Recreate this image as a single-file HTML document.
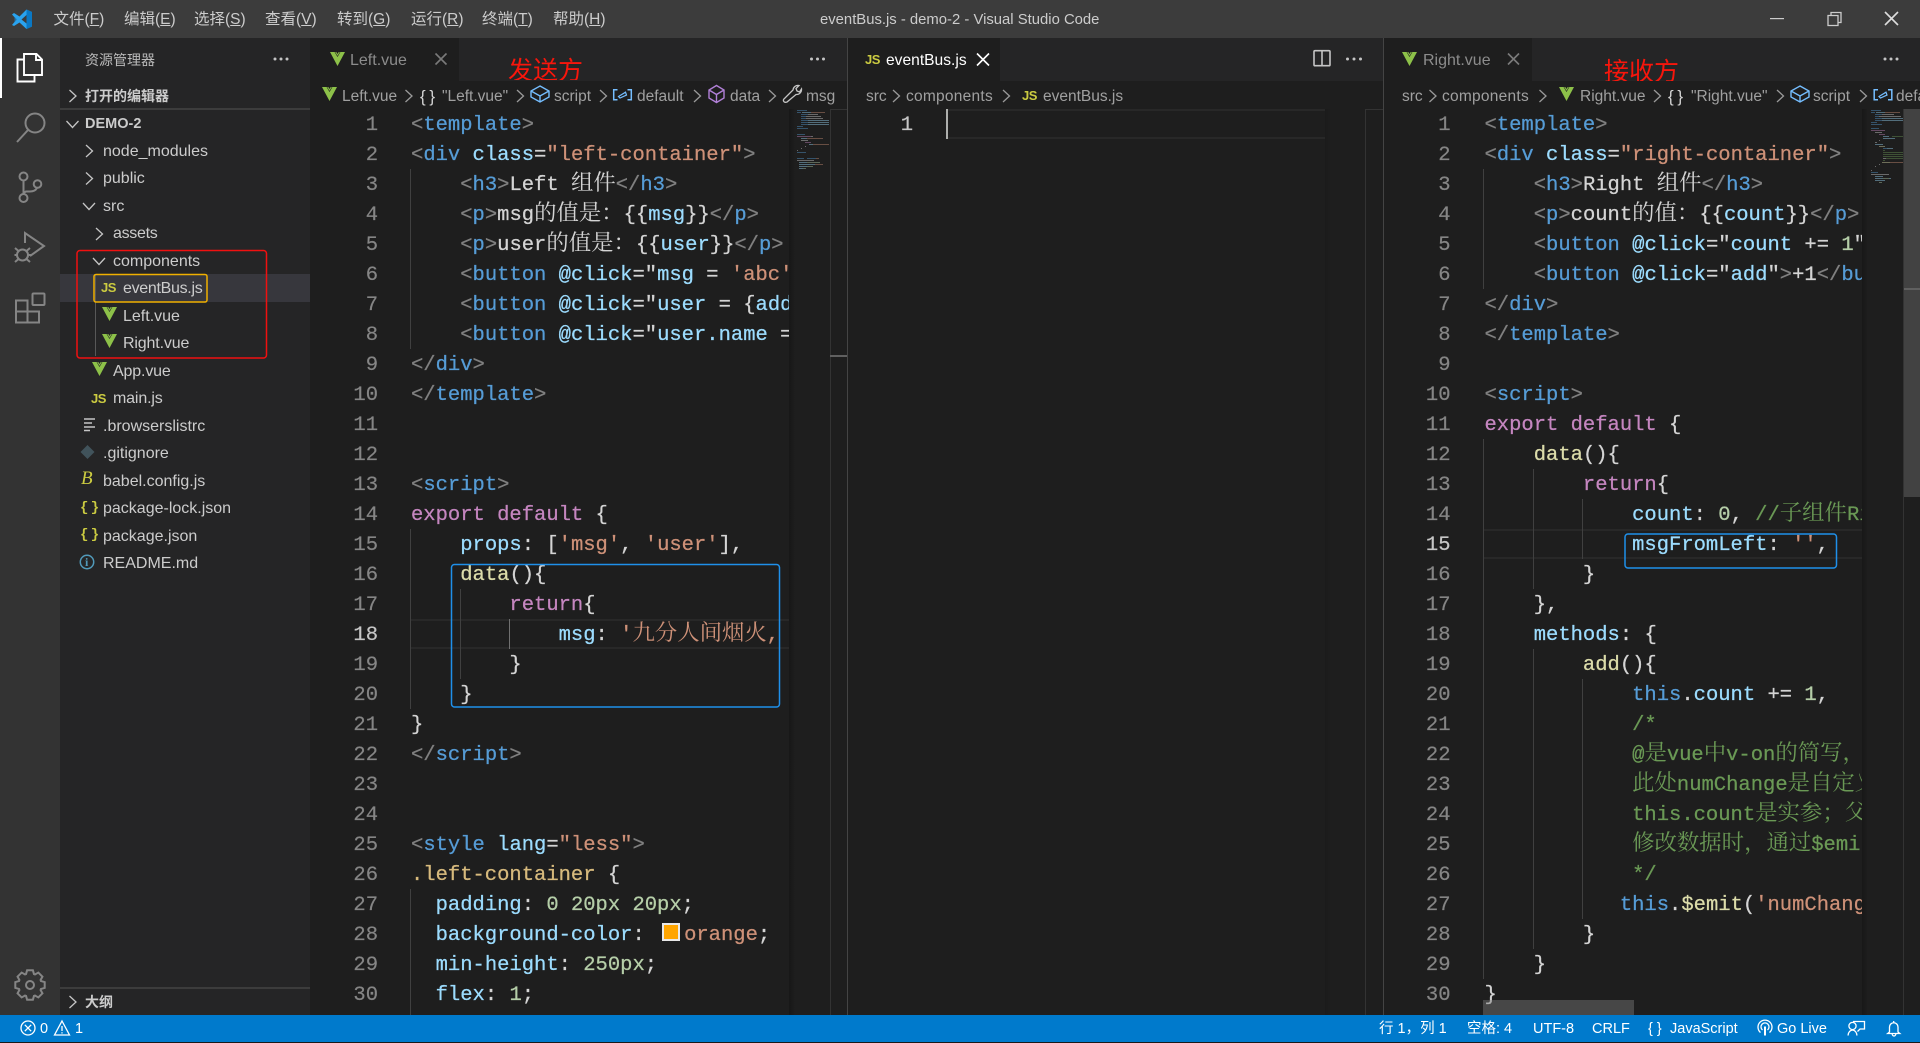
<!DOCTYPE html>
<html lang="zh"><head><meta charset="utf-8"><title>eventBus.js - demo-2 - Visual Studio Code</title>
<style>
html,body{margin:0;padding:0;width:1920px;height:1043px;overflow:hidden;background:#1a1a1a}
body{position:relative;font-family:"Liberation Sans","Noto Sans CJK SC",sans-serif;color:#ccc}
.r{position:absolute}
.t{position:absolute;white-space:pre}
.m{top:1px;height:38px;line-height:38px;font-size:15.5px;color:#ccc}
.f{font-size:16px;color:#ccc;height:28px;line-height:30px}
.h{font-size:14px;font-weight:bold;color:#ccc;height:28px;line-height:28px}
.c{top:82px;height:29px;line-height:29px;font-size:15.5px;color:#a0a0a0}
.tb{top:47px;height:28px;line-height:28px;font-size:16px;color:#8c8c8c}
.sb{top:1016px;height:27px;line-height:27px;font-size:14.5px;color:#fff}
.js{font-weight:bold;font-size:13px;color:#cbcb41;height:14px;line-height:14px;letter-spacing:-.5px}
.red{font-family:"Noto Sans CJK SC",sans-serif;font-size:25px;color:#f8160c;line-height:30px;height:26px;overflow:hidden}
.gd{position:absolute;width:1px;background:#404040}
.hl{position:absolute;height:26px;border-top:2px solid #282828;border-bottom:2px solid #282828}
.ln{position:absolute;top:111px;margin:0;font:20.5px/30px "Liberation Mono",monospace;color:#858585;text-align:right;-webkit-text-stroke:.2px}
.ln b{font-weight:normal;color:#c6c6c6}
.code{position:absolute;top:111px;height:904px;overflow:hidden;font:20.5px/30px "Liberation Mono",monospace;color:#d4d4d4;-webkit-text-stroke:.25px}
.code div{height:30px;white-space:pre;line-height:30px}
.code i{font-style:normal}
.code em{font-style:normal;font-size:22.4px;line-height:0;font-family:"Noto Serif CJK SC","Noto Sans CJK SC",serif;-webkit-text-stroke:0}
.g{color:#808080}.b{color:#569cd6}.a{color:#9cdcfe}.s{color:#ce9178}.k{color:#c586c0}.f2{color:#dcdcaa}.cm{color:#6a9955}.n{color:#b5cea8}.y{color:#d7ba7d}
</style></head><body>

<div class="r" style="left:0;top:0;width:1920px;height:38px;background:#3c3c3c"></div>
<div class="r" style="left:0;top:38px;width:60px;height:977px;background:#333"></div>
<div class="r" style="left:0;top:38px;width:2px;height:60px;background:#fff"></div>
<div class="r" style="left:60px;top:38px;width:250px;height:977px;background:#252526"></div>
<div class="r" style="left:310px;top:38px;width:1610px;height:977px;background:#1e1e1e"></div>
<div class="r" style="left:310px;top:38px;width:537px;height:43px;background:#252526"></div>
<div class="r" style="left:848px;top:38px;width:535px;height:43px;background:#252526"></div>
<div class="r" style="left:1384px;top:38px;width:536px;height:43px;background:#252526"></div>
<div class="r" style="left:310px;top:38px;width:149px;height:43px;background:#1e1e1e"></div>
<div class="r" style="left:848px;top:38px;width:152px;height:43px;background:#1e1e1e"></div>
<div class="r" style="left:1384px;top:38px;width:148px;height:43px;background:#1e1e1e"></div>
<div class="r" style="left:847px;top:38px;width:1px;height:977px;background:#444"></div>
<div class="r" style="left:1383px;top:38px;width:1px;height:977px;background:#444"></div>
<div class="r" style="left:60px;top:108px;width:250px;height:2px;background:#3c3c3c"></div>
<div class="r" style="left:60px;top:987px;width:250px;height:2px;background:#3c3c3c"></div>
<div class="r" style="left:60px;top:274px;width:250px;height:28px;background:#37373d"></div>
<div class="r" style="left:95px;top:274px;width:1px;height:82px;background:#585858"></div>

<!-- minimap shadows and scrollbar columns -->
<div class="r" style="left:789px;top:109px;width:6px;height:906px;background:linear-gradient(90deg,#171717,#1e1e1e)"></div>
<div class="r" style="left:1325px;top:109px;width:6px;height:906px;background:linear-gradient(90deg,#1b1b1b,#1e1e1e)"></div>
<div class="r" style="left:1862px;top:109px;width:6px;height:906px;background:linear-gradient(90deg,#171717,#1e1e1e)"></div>
<div class="r" style="left:830px;top:109px;width:1px;height:906px;background:#333"></div>
<div class="r" style="left:830px;top:109px;width:17px;height:1px;background:#333"></div>
<div class="r" style="left:830px;top:355px;width:17px;height:2px;background:#606060"></div>
<div class="r" style="left:1365px;top:109px;width:1px;height:906px;background:#333"></div>
<div class="r" style="left:1365px;top:109px;width:18px;height:1px;background:#333"></div>
<div class="r" style="left:1903px;top:109px;width:1px;height:906px;background:#333"></div>
<div class="r" style="left:1904px;top:109px;width:16px;height:388px;background:#424242"></div>
<div class="r" style="left:1904px;top:288px;width:16px;height:2px;background:#606060"></div>

<!-- current line highlight -->
<div class="hl" style="left:410px;top:619px;width:379px"></div>
<div class="hl" style="left:946px;top:109px;width:379px"></div>
<div class="hl" style="left:1484px;top:529px;width:378px"></div>

<!-- indent guides -->
<div class="gd" style="left:410px;top:169px;height:180px"></div>
<div class="gd" style="left:410px;top:529px;height:180px"></div>
<div class="gd" style="left:410px;top:889px;height:126px"></div>
<div class="gd" style="left:460px;top:589px;height:90px"></div>
<div class="gd" style="left:509px;top:619px;height:30px;background:#707070"></div>
<div class="gd" style="left:1483px;top:169px;height:120px"></div>
<div class="gd" style="left:1483px;top:439px;height:540px"></div>
<div class="gd" style="left:1533px;top:469px;height:120px"></div>
<div class="gd" style="left:1533px;top:649px;height:300px"></div>
<div class="gd" style="left:1582px;top:499px;height:60px"></div>
<div class="gd" style="left:1582px;top:679px;height:240px"></div>

<!-- title bar -->
<span class="t m" style="left:53.5px">文件(<u>F</u>)</span>
<span class="t m" style="left:124px">编辑(<u>E</u>)</span>
<span class="t m" style="left:194px">选择(<u>S</u>)</span>
<span class="t m" style="left:265px">查看(<u>V</u>)</span>
<span class="t m" style="left:337px">转到(<u>G</u>)</span>
<span class="t m" style="left:411px">运行(<u>R</u>)</span>
<span class="t m" style="left:482px">终端(<u>T</u>)</span>
<span class="t m" style="left:553px">帮助(<u>H</u>)</span>
<span class="t m" style="left:820px;font-size:14.85px">eventBus.js - demo-2 - Visual Studio Code</span>

<!-- sidebar text -->
<span class="t" style="left:85px;top:46px;height:28px;line-height:28px;font-size:14px;color:#bbb">资源管理器</span>
<span class="t h" style="left:85px;top:82px">打开的编辑器</span>
<span class="t h" style="left:85px;top:110px;font-size:14.5px">DEMO-2</span>
<span class="t f" style="left:103px;top:137px">node_modules</span>
<span class="t f" style="left:103px;top:164px">public</span>
<span class="t f" style="left:103px;top:192px">src</span>
<span class="t f" style="left:113px;top:219px;letter-spacing:-.3px">assets</span>
<span class="t f" style="left:113px;top:247px">components</span>
<span class="t f" style="left:123px;top:274px;letter-spacing:-.3px">eventBus.js</span>
<span class="t f" style="left:123px;top:302px">Left.vue</span>
<span class="t f" style="left:123px;top:329px;letter-spacing:-.15px">Right.vue</span>
<span class="t f" style="left:113px;top:357px;letter-spacing:-.15px">App.vue</span>
<span class="t f" style="left:113px;top:384px;letter-spacing:-.15px">main.js</span>
<span class="t f" style="left:103px;top:412px">.browserslistrc</span>
<span class="t f" style="left:103px;top:439px">.gitignore</span>
<span class="t f" style="left:103px;top:467px">babel.config.js</span>
<span class="t f" style="left:103px;top:494px">package-lock.json</span>
<span class="t f" style="left:103px;top:522px">package.json</span>
<span class="t f" style="left:103px;top:549px">README.md</span>
<span class="t h" style="left:85px;top:988px">大纲</span>
<span class="t js" style="left:101px;top:281px">JS</span>
<span class="t js" style="left:91px;top:392px">JS</span>
<span class="t" style="left:81px;top:470px;font:italic 19px/18px 'Liberation Serif',serif;color:#cbcb41">B</span>
<span class="t" style="left:80px;top:498px;font:bold 14px/20px 'Liberation Mono',monospace;color:#cbcb41;letter-spacing:-3px">{ }</span>
<span class="t" style="left:80px;top:525px;font:bold 14px/20px 'Liberation Mono',monospace;color:#cbcb41;letter-spacing:-3px">{ }</span>
<span class="t" style="left:85px;top:554px;font:bold 12px/16px 'Liberation Serif',serif;color:#519aba">i</span>

<!-- tabs -->
<span class="t tb" style="left:350px">Left.vue</span>
<span class="t tb" style="left:886px;color:#fff;font-size:15.6px">eventBus.js</span>
<span class="t js" style="left:865px;top:53px">JS</span>
<span class="t tb" style="left:1423px">Right.vue</span>
<span class="t red" style="left:508px;top:54px">发送方</span>
<span class="t red" style="left:1604px;top:55px">接收方</span>

<!-- breadcrumbs -->
<span class="t c" style="left:342px">Left.vue</span>
<span class="t c" style="left:420px;color:#d4d4d4;font-size:17px;letter-spacing:-.5px">{ }</span>
<span class="t c" style="left:442px">"Left.vue"</span>
<span class="t c" style="left:554px">script</span>
<span class="t c" style="left:637px">default</span>
<span class="t c" style="left:730px">data</span>
<span class="t c" style="left:806px">msg</span>
<span class="t c" style="left:866px">src</span>
<span class="t c" style="left:906px;letter-spacing:.25px">components</span>
<span class="t js" style="left:1022px;top:89px">JS</span>
<span class="t c" style="left:1043px">eventBus.js</span>
<span class="t c" style="left:1402px">src</span>
<span class="t c" style="left:1442px;letter-spacing:.25px">components</span>
<span class="t c" style="left:1580px">Right.vue</span>
<span class="t c" style="left:1668px;color:#d4d4d4;font-size:17px;letter-spacing:-.5px">{ }</span>
<span class="t c" style="left:1691px">"Right.vue"</span>
<span class="t c" style="left:1813px">script</span>
<span class="t c" style="left:1896px;width:24px;overflow:hidden">default</span>

<!-- line numbers -->
<pre class="ln" style="left:331px;width:47px">1
2
3
4
5
6
7
8
9
10
11
12
13
14
15
16
17
<b>18</b>
19
20
21
22
23
24
25
26
27
28
29
30</pre>
<pre class="ln" style="left:871px;width:42px"><b>1</b></pre>
<pre class="ln" style="left:1403.5px;width:47px">1
2
3
4
5
6
7
8
9
10
11
12
13
14
<b>15</b>
16
17
18
19
20
21
22
23
24
25
26
27
28
29
30</pre>

<div class="r" style="left:946px;top:109px;width:2px;height:30px;background:#aeafad"></div>

<!-- left code -->
<div class="code" style="left:411px;width:378px">
<div><i class=g>&lt;</i><i class=b>template</i><i class=g>&gt;</i></div>
<div><i class=g>&lt;</i><i class=b>div</i> <i class=a>class</i>=<i class=s>"left-container"</i><i class=g>&gt;</i></div>
<div>    <i class=g>&lt;</i><i class=b>h3</i><i class=g>&gt;</i>Left <em>组件</em><i class=g>&lt;/</i><i class=b>h3</i><i class=g>&gt;</i></div>
<div>    <i class=g>&lt;</i><i class=b>p</i><i class=g>&gt;</i>msg<em>的值是：</em>{{<i class=a>msg</i>}}<i class=g>&lt;/</i><i class=b>p</i><i class=g>&gt;</i></div>
<div>    <i class=g>&lt;</i><i class=b>p</i><i class=g>&gt;</i>user<em>的值是：</em>{{<i class=a>user</i>}}<i class=g>&lt;/</i><i class=b>p</i><i class=g>&gt;</i></div>
<div>    <i class=g>&lt;</i><i class=b>button</i> <i class=a>@click</i>="<i class=a>msg</i> = <i class=s>'abc'</i></div>
<div>    <i class=g>&lt;</i><i class=b>button</i> <i class=a>@click</i>="<i class=a>user</i> = {<i class=a>address</i></div>
<div>    <i class=g>&lt;</i><i class=b>button</i> <i class=a>@click</i>="<i class=a>user.name</i> = </div>
<div><i class=g>&lt;/</i><i class=b>div</i><i class=g>&gt;</i></div>
<div><i class=g>&lt;/</i><i class=b>template</i><i class=g>&gt;</i></div>
<div></div>
<div></div>
<div><i class=g>&lt;</i><i class=b>script</i><i class=g>&gt;</i></div>
<div><i class=k>export default</i> {</div>
<div>    <i class=a>props</i>: [<i class=s>'msg'</i>, <i class=s>'user'</i>],</div>
<div>    <i class=f2>data</i>(){</div>
<div>        <i class=k>return</i>{</div>
<div>            <i class=a>msg</i>: <i class=s>'<em>九分人间烟火</em>,</i></div>
<div>        }</div>
<div>    }</div>
<div>}</div>
<div><i class=g>&lt;/</i><i class=b>script</i><i class=g>&gt;</i></div>
<div></div>
<div></div>
<div><i class=g>&lt;</i><i class=b>style</i> <i class=a>lang</i>=<i class=s>"less"</i><i class=g>&gt;</i></div>
<div><i class=y>.left-container</i> {</div>
<div>  <i class=a>padding</i>: <i class=n>0 20px 20px</i>;</div>
<div>  <i class=a>background-color</i>: <span style="display:inline-block;width:27px"></span><i class=s>orange</i>;</div>
<div>  <i class=a>min-height</i>: <i class=n>250px</i>;</div>
<div>  <i class=a>flex</i>: <i class=n>1</i>;</div>
</div>
<div class="r" style="left:662px;top:923px;width:14px;height:14px;background:#ffa500;border:2px solid #e8e8e8"></div>

<!-- right code -->
<div class="code" style="left:1484.5px;width:377.5px">
<div><i class=g>&lt;</i><i class=b>template</i><i class=g>&gt;</i></div>
<div><i class=g>&lt;</i><i class=b>div</i> <i class=a>class</i>=<i class=s>"right-container"</i><i class=g>&gt;</i></div>
<div>    <i class=g>&lt;</i><i class=b>h3</i><i class=g>&gt;</i>Right <em>组件</em><i class=g>&lt;/</i><i class=b>h3</i><i class=g>&gt;</i></div>
<div>    <i class=g>&lt;</i><i class=b>p</i><i class=g>&gt;</i>count<em>的值：</em>{{<i class=a>count</i>}}<i class=g>&lt;/</i><i class=b>p</i><i class=g>&gt;</i></div>
<div>    <i class=g>&lt;</i><i class=b>button</i> <i class=a>@click</i>="<i class=a>count</i> += <i class=n>1</i>"<i class=g>&gt;</i></div>
<div>    <i class=g>&lt;</i><i class=b>button</i> <i class=a>@click</i>="<i class=a>add</i>"<i class=g>&gt;</i>+1<i class=g>&lt;/</i><i class=b>button</i></div>
<div><i class=g>&lt;/</i><i class=b>div</i><i class=g>&gt;</i></div>
<div><i class=g>&lt;/</i><i class=b>template</i><i class=g>&gt;</i></div>
<div></div>
<div><i class=g>&lt;</i><i class=b>script</i><i class=g>&gt;</i></div>
<div><i class=k>export default</i> {</div>
<div>    <i class=f2>data</i>(){</div>
<div>        <i class=k>return</i>{</div>
<div>            <i class=a>count</i>: <i class=n>0</i>, <i class=cm>//<em>子组件</em>Right</i></div>
<div>            <i class=a>msgFromLeft</i>: <i class=s>''</i>,</div>
<div>        }</div>
<div>    },</div>
<div>    <i class=a>methods</i>: {</div>
<div>        <i class=f2>add</i>(){</div>
<div>            <i class=b>this</i>.<i class=a>count</i> += <i class=n>1</i>,</div>
<div><i class=cm>            /*</i></div>
<div><i class=cm>            @<em>是</em>vue<em>中</em>v-on<em>的简写，</em></i></div>
<div><i class=cm>            <em>此处</em>numChange<em>是自定义</em></i></div>
<div><i class=cm>            this.count<em>是实参；父</em></i></div>
<div><i class=cm>            <em>修改数据时，通过</em>$emit</i></div>
<div><i class=cm>            */</i></div>
<div>           <i class=b>this</i>.<i class=f2>$emit</i>(<i class=s>'numChange'</i></div>
<div>        }</div>
<div>    }</div>
<div>}</div>
</div>
<div class="r" style="left:1483px;top:1000px;width:151px;height:15px;background:rgba(121,121,121,.45)"></div>

<!-- status bar -->
<div class="r" style="left:0;top:1015px;width:1920px;height:27px;background:#007acc"></div>
<span class="t sb" style="left:40px">0</span>
<span class="t sb" style="left:75px">1</span>
<span class="t sb" style="left:1379px">行 1，列 1</span>
<span class="t sb" style="left:1467px">空格: 4</span>
<span class="t sb" style="left:1533px">UTF-8</span>
<span class="t sb" style="left:1592px">CRLF</span>
<span class="t sb" style="left:1648px">{ }</span>
<span class="t sb" style="left:1670px">JavaScript</span>
<span class="t sb" style="left:1777px">Go Live</span>

<!-- all icons -->
<svg class="r" style="left:0;top:0" width="1920" height="1043" viewBox="0 0 1920 1043" xmlns="http://www.w3.org/2000/svg">
<defs>
<g id="v"><path fill="#8dc149" fill-rule="evenodd" d="M0 0H4.6L7.5 5 10.4 0H15L7.5 14Z M5.2 0L7.5 3.9 9.8 0H8.7L7.5 2 6.3 0Z"/></g>
<path id="cr" fill="none" d="M0 0L6.5 6 0 12"/>
<path id="cd" fill="none" d="M0 0L6 6.5 12 0"/>
<g id="cube" fill="none" stroke="#75beff" stroke-width="1.4"><path d="M9 0L18 5V11L9 16 0 11V5Z M0 5L9 10 18 5 M9 10V16"/></g>
<g id="br" fill="none" stroke="#75beff" stroke-width="1.5"><path d="M4.5 .7H.7V10.8H4.5 M14.5 .7H18.3V10.8H14.5"/><path stroke-width="1.2" d="M5.5 7.5L12.5 3.2 13.5 6 7 9Z"/></g>
</defs>

<!-- logo -->
<path fill="#2aa3ef" d="M12 14.5L14 13 19.5 16.5 26.5 9.5 32 12V26.5L26.5 29 19.5 22.5 14 26 12 25 16.5 19.5Z"/>
<path fill="#0a78c4" d="M26.5 9.5L32 12V26.5L26.5 29Z"/>
<path fill="#3c3c3c" d="M26.5 15L21.5 19.5 26.5 23.5Z"/>
<path fill="#1c8fd8" d="M14.5 16.5L17.5 19.5 14.5 22.7Z" opacity=".6"/>

<!-- window controls -->
<path stroke="#ccc" stroke-width="1.2" d="M1770 18.6H1784" fill="none"/>
<path fill="none" stroke="#ccc" stroke-width="1.3" d="M1828 15.5H1838V25.5H1828Z M1831 15.5V12.5H1841V22.5H1838"/>
<path fill="none" stroke="#ddd" stroke-width="1.6" d="M1885 12L1898 25 M1898 12L1885 25"/>

<!-- activity bar -->
<g fill="none" stroke="#fff" stroke-width="1.9">
<path d="M34.5 75.5V81.5H17.5V59.5H24"/>
<path d="M24 54H36.5L42 59.5V75H24Z M36 54V60H42"/>
</g>
<g fill="none" stroke="#858585" stroke-width="2">
<circle cx="35" cy="123" r="9.5"/><path d="M28 130L17 142"/>
<circle cx="23.5" cy="176.5" r="4"/><circle cx="23.5" cy="198" r="4"/><circle cx="37.5" cy="184" r="3.8"/>
<path d="M23.5 180.5V194 M37 188Q35 191.5 30 191.5H26Q24 192 23.5 194"/>
<path d="M25 243V233L44 246 30 256"/>
<circle cx="22.5" cy="255" r="5.5"/><path d="M15 248L18.5 251 M30 248L26.5 251 M14.5 255H17 M28 255H31 M15 262L18.5 259 M30 262L26.5 259"/>
<path d="M16 300.5H27.5V322.5H16Z M16 311.5H39V322.5H27.5"/>
<rect x="32.5" y="293.5" width="12" height="11.5" rx="1"/>
<circle cx="30" cy="985" r="4"/>
<g transform="translate(30 985)">
<path d="M10.2-4.2L14.7-2.9V2.9L10.2 4.2"/><path transform="rotate(45)" d="M10.2-4.2L14.7-2.9V2.9L10.2 4.2"/><path transform="rotate(90)" d="M10.2-4.2L14.7-2.9V2.9L10.2 4.2"/><path transform="rotate(135)" d="M10.2-4.2L14.7-2.9V2.9L10.2 4.2"/><path transform="rotate(180)" d="M10.2-4.2L14.7-2.9V2.9L10.2 4.2"/><path transform="rotate(225)" d="M10.2-4.2L14.7-2.9V2.9L10.2 4.2"/><path transform="rotate(270)" d="M10.2-4.2L14.7-2.9V2.9L10.2 4.2"/><path transform="rotate(315)" d="M10.2-4.2L14.7-2.9V2.9L10.2 4.2"/>
</g>
</g>

<!-- sidebar dots and chevrons -->
<g fill="#c5c5c5"><circle cx="275" cy="59" r="1.5"/><circle cx="281" cy="59" r="1.5"/><circle cx="287" cy="59" r="1.5"/>
<circle cx="811.5" cy="59" r="1.5"/><circle cx="817.5" cy="59" r="1.5"/><circle cx="823.5" cy="59" r="1.5"/>
<circle cx="1347.5" cy="59" r="1.5"/><circle cx="1354" cy="59" r="1.5"/><circle cx="1360.5" cy="59" r="1.5"/>
<circle cx="1885" cy="59" r="1.5"/><circle cx="1891" cy="59" r="1.5"/><circle cx="1897" cy="59" r="1.5"/></g>
<g stroke="#c5c5c5" stroke-width="1.3">
<use href="#cr" x="69.5" y="90"/><use href="#cd" x="66.5" y="121"/>
<use href="#cr" x="86" y="145"/><use href="#cr" x="86" y="172.5"/><use href="#cd" x="83" y="203"/>
<use href="#cr" x="96" y="228"/><use href="#cd" x="93" y="258"/><use href="#cr" x="69.5" y="996"/>
</g>

<!-- tree icons -->
<use href="#v" x="102" y="307"/><use href="#v" x="102" y="334"/><use href="#v" x="92" y="362"/>
<path stroke="#c5c5c5" stroke-width="1.6" fill="none" d="M84 419H95 M84 423H92 M84 427H95 M84 430.5H90"/>
<path fill="#41535b" d="M87.5 445L94.5 452 87.5 459 80.5 452Z"/>
<circle cx="87" cy="562" r="6.7" fill="none" stroke="#519aba" stroke-width="1.5"/>

<!-- tab icons -->
<use href="#v" x="330" y="52"/><use href="#v" x="1402" y="52"/>
<g fill="none" stroke-width="1.6">
<path stroke="#7a7a7a" d="M435.5 53.5L446.5 64.5 M446.5 53.5L435.5 64.5"/>
<path stroke="#fff" d="M977 53.5L989 65.5 M989 53.5L977 65.5"/>
<path stroke="#7a7a7a" d="M1508 53.5L1519 64.5 M1519 53.5L1508 64.5"/>
<rect x="1314" y="50.7" width="16" height="15" rx="1" stroke="#c5c5c5"/><path stroke="#c5c5c5" d="M1322 51V66"/>
</g>

<!-- breadcrumb icons -->
<use href="#v" x="322" y="87"/><use href="#v" x="1559" y="87"/>
<g stroke="#9a9a9a" stroke-width="1.3">
<use href="#cr" x="405.5" y="90"/><use href="#cr" x="517" y="90"/><use href="#cr" x="600" y="90"/><use href="#cr" x="694" y="90"/><use href="#cr" x="769" y="90"/>
<use href="#cr" x="893" y="90"/><use href="#cr" x="1003" y="90"/>
<use href="#cr" x="1429.5" y="90"/><use href="#cr" x="1539.5" y="90"/><use href="#cr" x="1654" y="90"/><use href="#cr" x="1777" y="90"/><use href="#cr" x="1860" y="90"/>
</g>
<use href="#cube" x="531" y="86"/><use href="#cube" x="1791" y="86"/>
<use href="#br" x="613" y="89"/><use href="#br" x="1873.5" y="89"/>
<path fill="none" stroke="#b180d7" stroke-width="1.4" d="M716.5 85.5L724 90V98L716.5 102.5 709 98V90Z M709 90L716.5 94.5 724 90 M716.5 94.5V102.5"/>
<path fill="none" stroke="#c5c5c5" stroke-width="1.3" d="M793 90A5 5 0 0 1 799 85.5L796 88.5 797 91 799.5 92 801.5 89A5 5 0 0 1 796 94.5L787 102Q784.5 103 783.5 101 783 99.5 784.5 98.5Z"/>

<!-- minimap left -->
<g fill="none" stroke-width="1" opacity=".42">
<path stroke="#569cd6" d="M797 110.5h10 M797 112.5h4 M801 114.5h7 M801 116.5h5 M801 118.5h5 M801 120.5h7 M801 122.5h7 M801 124.5h7 M797 126.5h6 M797 128.5h11 M797 134.5h8 M797 152.5h9 M797 158.5h7 M807 158.5h9"/>
<path stroke="#9cdcfe" d="M802 112.5h9 M808 120.5h21 M808 122.5h21 M808 124.5h21 M801 138.5h6 M809 144.5h4 M799 162.5h8 M799 164.5h16 M799 166.5h10 M799 168.5h4"/>
<path stroke="#ce9178" d="M811 112.5h14 M807 138.5h16 M813 144.5h16 M816 158.5h3 M815 164.5h8"/>
<path stroke="#c586c0" d="M797 136.5h14 M805 142.5h6"/>
<path stroke="#d4d4d4" d="M808 114.5h10 M806 116.5h15 M806 118.5h17 M811 136.5h2 M801 140.5h7 M805 146.5h1 M801 148.5h1 M797 150.5h1 M797 160.5h17"/>
<path stroke="#b5cea8" d="M807 162.5h13 M807 166.5h6 M803 168.5h3"/>
</g>
<!-- minimap right -->
<g fill="none" stroke-width="1" opacity=".42">
<path stroke="#569cd6" d="M1871 110.5h10 M1871 112.5h4 M1875 114.5h7 M1875 116.5h4 M1875 118.5h7 M1875 120.5h7 M1871 122.5h6 M1871 124.5h11 M1871 128.5h8 M1883 148.5h4 M1871 172.5h7"/>
<path stroke="#9cdcfe" d="M1876 112.5h9 M1882 118.5h21 M1882 120.5h21 M1883 136.5h6 M1883 138.5h12 M1875 144.5h8 M1887 148.5h6 M1875 176.5h8 M1875 178.5h16 M1875 180.5h10"/>
<path stroke="#ce9178" d="M1885 112.5h15 M1890 162.5h13"/>
<path stroke="#c586c0" d="M1871 130.5h14 M1879 134.5h6"/>
<path stroke="#d4d4d4" d="M1882 114.5h12 M1879 116.5h22 M1875 132.5h7 M1879 140.5h1 M1875 142.5h2 M1883 158.5h3 M1871 170.5h1 M1879 164.5h1 M1875 166.5h1 M1871 174.5h18"/>
<path stroke="#dcdcaa" d="M1879 146.5h6 M1882 162.5h8"/>
<path stroke="#6a9955" d="M1892 136.5h11 M1883 150.5h2 M1883 152.5h20 M1883 154.5h20 M1883 156.5h20 M1886 158.5h17 M1883 160.5h2"/>
<path stroke="#b5cea8" d="M1883 178.5h6 M1879 182.5h3"/>
</g>

<!-- annotations -->
<rect x="77" y="250.5" width="189.5" height="107.5" rx="3" fill="none" stroke="#f01010" stroke-width="1.5"/>
<rect x="94" y="274.5" width="113" height="27.5" rx="2" fill="none" stroke="#f0b000" stroke-width="1.5"/>
<rect x="451.5" y="564.5" width="328" height="142.5" rx="3" fill="none" stroke="#1f90ea" stroke-width="1.5"/>
<rect x="1625" y="534" width="211.5" height="34" rx="3" fill="none" stroke="#1f90ea" stroke-width="1.5"/>

<!-- status icons -->
<g fill="none" stroke="#fff" stroke-width="1.3">
<circle cx="28" cy="1028" r="7"/><path d="M24.8 1024.8L31.2 1031.2 M31.2 1024.8L24.8 1031.2"/>
<path d="M62 1021L69.5 1035H54.5Z M62 1026V1031 M62 1032.3V1033.5"/>
<path d="M1760.5 1032.5A7 7 0 1 1 1769.5 1032.5 M1762.5 1030A4 4 0 1 1 1767.5 1030"/>
<path stroke-width="2" d="M1765 1026.5V1035.5"/>
<circle cx="1852.5" cy="1026" r="3.6"/><path d="M1848 1035.5Q1848.5 1030.5 1852.5 1030 1856.5 1030.5 1857 1035.5 M1853 1021.5H1864.5V1029H1860L1857.5 1031.5"/>
<path d="M1889.5 1032V1027A4.2 4.2 0 0 1 1898 1027V1032L1899.8 1033.5H1887.7Z M1892 1033.5Q1892.5 1036 1894 1036 1895.5 1036 1896 1033.5 M1893.7 1022.5V1021"/>
</g>
</svg>
</body></html>
